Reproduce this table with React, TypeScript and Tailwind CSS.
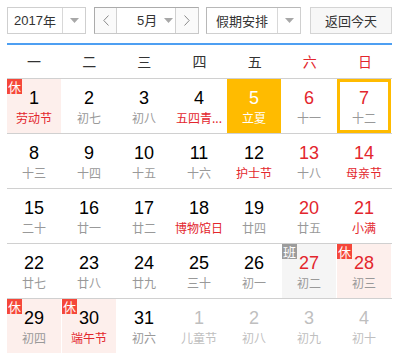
import React from "react";

type Cell = {
  d: number;
  l: string;
  redNum?: boolean;
  redLunar?: boolean;
  badge?: "休" | "班";
  today?: boolean;
  selected?: boolean;
  faded?: boolean;
};

const rows: Cell[][] = [
  [
    { d: 1, l: "劳动节", redLunar: true, badge: "休" },
    { d: 2, l: "初七" },
    { d: 3, l: "初八" },
    { d: 4, l: "五四青...", redLunar: true },
    { d: 5, l: "立夏", today: true },
    { d: 6, l: "十一", redNum: true },
    { d: 7, l: "十二", redNum: true, selected: true },
  ],
  [
    { d: 8, l: "十三" },
    { d: 9, l: "十四" },
    { d: 10, l: "十五" },
    { d: 11, l: "十六" },
    { d: 12, l: "护士节", redLunar: true },
    { d: 13, l: "十八", redNum: true },
    { d: 14, l: "母亲节", redNum: true, redLunar: true },
  ],
  [
    { d: 15, l: "二十" },
    { d: 16, l: "廿一" },
    { d: 17, l: "廿二" },
    { d: 18, l: "博物馆日", redLunar: true },
    { d: 19, l: "廿四" },
    { d: 20, l: "廿五", redNum: true },
    { d: 21, l: "小满", redNum: true, redLunar: true },
  ],
  [
    { d: 22, l: "廿七" },
    { d: 23, l: "廿八" },
    { d: 24, l: "廿九" },
    { d: 25, l: "三十" },
    { d: 26, l: "初一" },
    { d: 27, l: "初二", redNum: true, badge: "班" },
    { d: 28, l: "初三", redNum: true, badge: "休" },
  ],
  [
    { d: 29, l: "初四", badge: "休" },
    { d: 30, l: "端午节", redLunar: true, badge: "休" },
    { d: 31, l: "初六" },
    { d: 1, l: "儿童节", faded: true },
    { d: 2, l: "初八", faded: true },
    { d: 3, l: "初九", faded: true },
    { d: 4, l: "初十", faded: true },
  ],
];

const weekdays = ["一", "二", "三", "四", "五", "六", "日"];

const Arrow = () => (
  <svg width="9" height="5" viewBox="0 0 9 5">
    <path d="M0 0 H9 L4.5 5 Z" fill="#a8a8a8" />
  </svg>
);

function DayCell({ c }: { c: Cell }) {
  let bg = "bg-white";
  if (c.today) bg = "bg-[#ffbb00]";
  else if (c.badge === "休") bg = "bg-[#fdefec]";
  else if (c.badge === "班") bg = "bg-[#f5f5f5]";

  let numColor = "text-[#000]";
  if (c.today) numColor = "text-white";
  else if (c.faded) numColor = "text-[#bfbfbf]";
  else if (c.redNum) numColor = "text-[#e3262d]";

  let lunarColor = "text-[#999]";
  if (c.today) lunarColor = "text-white";
  else if (c.faded) lunarColor = "text-[#bfbfbf]";
  else if (c.redLunar) lunarColor = "text-[#e3262d]";

  return (
    <div
      className={`relative h-[54px] flex flex-col items-center ${bg} ${
        c.selected ? "border-[3px] border-[#ffbb00] pt-[6px]" : "pt-[9px]"
      }`}
    >
      {c.badge && (
        <div
          className={`absolute left-0 top-0 w-[15px] h-[15px] flex items-center justify-center text-white text-[13px] leading-none ${
            c.badge === "休" ? "bg-[#f5473a]" : "bg-[#9c9c9c]"
          }`}
        >
          {c.badge}
        </div>
      )}
      <div
        className={`text-[18px] leading-[20px] ${numColor}`}
        style={{ fontFamily: '"Liberation Sans", Arial, sans-serif' }}
      >
        {c.d}
      </div>
      <div
        className={`mt-[2px] w-full text-center text-[12px] leading-[16px] whitespace-nowrap ${lunarColor}`}
      >
        {c.l}
      </div>
    </div>
  );
}

export default function App() {
  return (
    <div
      className="w-[401px] h-[360px] bg-white overflow-hidden"
      style={{ fontFamily: '"Noto Sans CJK SC", "Liberation Sans", sans-serif' }}
    >
      <div className="ml-[7px] w-[385px]">
        {/* toolbar */}
        <div className="mt-[7px] flex h-[27px] text-[13px] text-[#333]">
          <div className="flex w-[79px] border border-[#cfcfcf] bg-white">
            <div
              className="w-[54px] flex items-center justify-center"
              style={{ fontFamily: '"Liberation Sans", "Noto Sans CJK SC", sans-serif' }}
            >
              2017<span style={{ fontFamily: '"Noto Sans CJK SC", sans-serif' }}>年</span>
            </div>
            <div className="flex-1 flex items-center justify-center border-l border-[#d8d8d8]">
              <Arrow />
            </div>
          </div>
          <div className="ml-[8px] flex w-[105px] border border-[#ababab] border-r-[#c8c8c8] border-b-[#c8c8c8]">
            <div className="w-[21px] flex items-center justify-center bg-[#fafafa]">
              <svg width="6" height="11" viewBox="0 0 6 11">
                <path d="M5.5 0.5 L0.8 5.5 L5.5 10.5" fill="none" stroke="#8a8a8a" strokeWidth="1" />
              </svg>
            </div>
            <div className="w-[60px] flex items-center border-l border-r border-[#d0d0d0] bg-white">
              <div
                className="ml-[20px] w-[24px]"
                style={{ fontFamily: '"Liberation Sans", "Noto Sans CJK SC", sans-serif' }}
              >
                5<span style={{ fontFamily: '"Noto Sans CJK SC", sans-serif' }}>月</span>
              </div>
              <div className="ml-[3px]">
                <Arrow />
              </div>
            </div>
            <div className="flex-1 flex items-center justify-center bg-[#fafafa]">
              <svg width="6" height="11" viewBox="0 0 6 11">
                <path d="M0.5 0.5 L5.2 5.5 L0.5 10.5" fill="none" stroke="#8a8a8a" strokeWidth="1" />
              </svg>
            </div>
          </div>
          <div className="ml-[7px] flex w-[95px] border border-[#b8b8b8] border-r-[#d0d0d0] border-b-[#d0d0d0] bg-white">
            <div className="w-[70px] flex items-center justify-center">假期安排</div>
            <div className="flex-1 flex items-center justify-center border-l border-[#d8d8d8]">
              <Arrow />
            </div>
          </div>
          <div className="ml-[9px] flex-1 flex items-center justify-center border border-[#d4d4d4] bg-[#f7f7f7]">
            返回今天
          </div>
        </div>

        {/* blue line */}
        <div className="mt-[9px] h-[2px] bg-[#4d9ff2]" />

        {/* weekdays */}
        <div className="grid grid-cols-7 gap-x-[1px] h-[33px] items-center text-[14px]">
          {weekdays.map((w, i) => (
            <div
              key={w}
              className={`text-center ${i >= 5 ? "text-[#e3262d]" : "text-[#333]"}`}
            >
              {w}
            </div>
          ))}
        </div>

        {rows.map((r, ri) => (
          <div key={ri}>
            <div className="h-[1px] bg-[#d0d0d0]" />
            <div className="grid grid-cols-[54px_54px_54px_54px_54px_54px_54px] gap-x-[1px]">
              {r.map((c, ci) => (
                <DayCell key={ci} c={c} />
              ))}
            </div>
          </div>
        ))}
      </div>
    </div>
  );
}
